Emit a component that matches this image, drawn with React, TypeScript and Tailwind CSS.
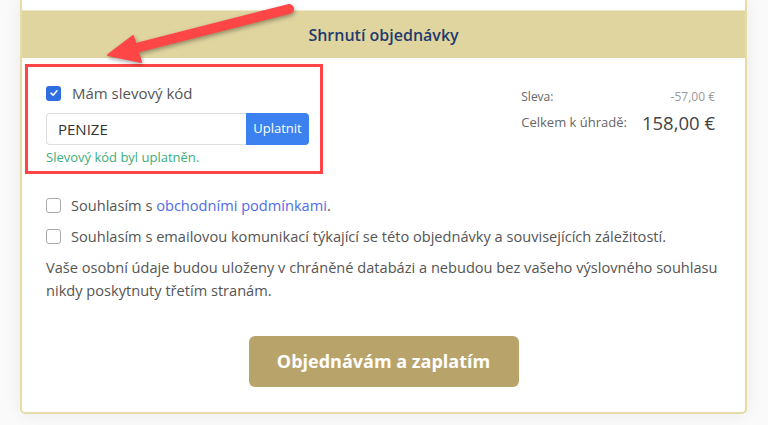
import React from "react";

function CheckBox({ checked }: { checked?: boolean }) {
  if (checked) {
    return (
      <span className="flex h-[15px] w-[15px] shrink-0 items-center justify-center rounded-[3px] bg-[#2f6ee0]">
        <svg width="10" height="10" viewBox="0 0 10 10">
          <path d="M2 5.2 L4.1 7.2 L8 2.8" fill="none" stroke="#fff" strokeWidth="1.6" strokeLinecap="round" strokeLinejoin="round" />
        </svg>
      </span>
    );
  }
  return <span className="block h-[15px] w-[15px] shrink-0 rounded-[3px] border border-[#a9a9a9] bg-white" />;
}

export default function App() {
  return (
    <div
      className="relative h-[425px] w-[768px] overflow-hidden bg-[#fafafa]"
      style={{ fontFamily: '"Open Sans", "Noto Sans", sans-serif' }}
    >
      <div className="ml-[20px] w-[727px] rounded-b-[5px] border-2 border-t-0 border-[#e6dca6] bg-white shadow-[0_0_18px_rgba(0,0,0,0.07)]">
        <div className="h-[11px] border-b border-[#efe8c8]" />
        <div className="flex h-[47px] items-center justify-center bg-[#e0d59f] text-[16px] font-semibold text-[#1f3b6e]">
          Shrnutí objednávky
        </div>
        <div className="px-[24px] pt-[26px] pb-[25px]">
          <div className="flex justify-between">
            <div className="w-[263px]">
              <div className="flex h-[18px] items-center gap-[11px]">
                <CheckBox checked />
                <span className="text-[15px] text-[#555]">Mám slevový kód</span>
              </div>
              <div className="mt-[11px] flex h-[32px]">
                <div className="flex flex-1 items-center rounded-l-[4px] border border-r-0 border-[#dedede] pl-[11px] text-[15px] text-[#333]">
                  PENIZE
                </div>
                <div className="flex w-[63px] items-center justify-center rounded-r-[4px] bg-[#3b82f0] text-[13px] text-white">
                  Uplatnit
                </div>
              </div>
              <div className="mt-[3px] text-[13px] text-[#3dae78]">Slevový kód byl uplatněn.</div>
            </div>
            <div className="mr-[6px] pt-[4px]">
              <div className="flex items-center justify-between text-[12px]">
                <span className="text-[#666]">Sleva:</span>
                <span className="text-[#999]">-57,00 €</span>
              </div>
              <div className="mt-[3px] flex items-center gap-[15px]">
                <span className="text-[13px] text-[#666]">Celkem k úhradě:</span>
                <span className="text-[18.5px] text-[#444]">158,00 €</span>
              </div>
            </div>
          </div>
          <div className="mt-[28px] flex h-[20px] items-center gap-[10px] text-[14.6px] text-[#555]">
            <CheckBox />
            <span>
              Souhlasím s <span className="text-[#4f6ce8]">obchodními podmínkami</span>.
            </span>
          </div>
          <div className="mt-[11px] flex h-[20px] items-center gap-[10px] text-[14.6px] text-[#555]">
            <CheckBox />
            <span>Souhlasím s emailovou komunikací týkající se této objednávky a souvisejících záležitostí.</span>
          </div>
          <p className="mt-[9px] w-[690px] text-[14.6px] leading-[23px] text-[#555]">
            Vaše osobní údaje budou uloženy v chráněné databázi a nebudou bez vašeho výslovného souhlasu nikdy poskytnuty třetím stranám.
          </p>
          <div className="mt-[34px] flex justify-center">
            <div className="flex h-[51px] w-[270px] items-center justify-center rounded-[6px] bg-[#b8a46b] text-[18px] font-bold text-white">
              Objednávám a zaplatím
            </div>
          </div>
        </div>
      </div>

      <div className="pointer-events-none absolute left-[25px] top-[64px] h-[110px] w-[298px] border-[3px] border-[#ff4545]" />

      <svg
        className="pointer-events-none absolute left-0 top-0"
        width="768"
        height="425"
        viewBox="0 0 768 425"
        style={{ filter: "drop-shadow(1px 2px 2px rgba(0,0,0,0.35))" }}
      >
        <line x1="289" y1="9" x2="132" y2="49" stroke="#ff4646" strokeWidth="10" strokeLinecap="round" />
        <path d="M108 55 L133 36 L141 62 Z" fill="#ff4646" stroke="#ff4646" strokeWidth="2" strokeLinejoin="round" />
      </svg>
    </div>
  );
}
